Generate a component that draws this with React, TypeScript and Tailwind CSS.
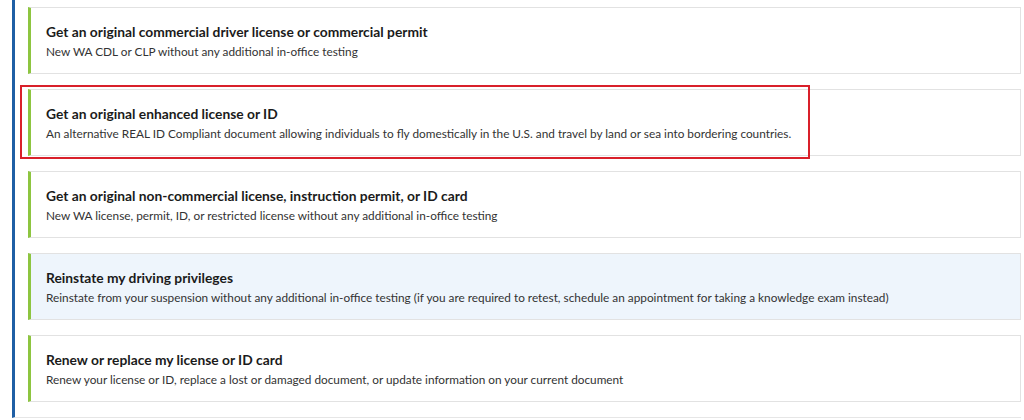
const services = [
  {
    title: "Get an original commercial driver license or commercial permit",
    desc: "New WA CDL or CLP without any additional in-office testing",
  },
  {
    title: "Get an original enhanced license or ID",
    desc: "An alternative REAL ID Compliant document allowing individuals to fly domestically in the U.S. and travel by land or sea into bordering countries.",
    marked: true,
  },
  {
    title: "Get an original non-commercial license, instruction permit, or ID card",
    desc: "New WA license, permit, ID, or restricted license without any additional in-office testing",
  },
  {
    title: "Reinstate my driving privileges",
    desc: "Reinstate from your suspension without any additional in-office testing (if you are required to retest, schedule an appointment for taking a knowledge exam instead)",
    hover: true,
  },
  {
    title: "Renew or replace my license or ID card",
    desc: "Renew your license or ID, replace a lost or damaged document, or update information on your current document",
  },
];

function ServiceCard({
  title,
  desc,
  marked,
  hover,
}: {
  title: string;
  desc: string;
  marked?: boolean;
  hover?: boolean;
}) {
  return (
    <div className="relative">
      <a
        href="#"
        className={
          "flex h-[67px] flex-col justify-center border border-l-[3px] border-[#e2e2e2] border-l-[#8dc540] pl-[15px] pr-4 pt-[2px] " +
          (hover ? "bg-[#eef5fc]" : "bg-white")
        }
      >
        <span className="text-[13.8px] font-bold leading-[20px] text-[#1b1b1b]">{title}</span>
        <span className="text-[11.8px] leading-[19px] text-[#333333]">{desc}</span>
      </a>
      {marked && (
        <div className="pointer-events-none absolute -left-[8px] -top-[4px] h-[74px] w-[790px] border-2 border-[#d9202a]" />
      )}
    </div>
  );
}

export default function App() {
  return (
    <div className="h-[420px] w-[1024px] bg-white font-['Lato',sans-serif]">
      <div className="ml-[12px] mr-[3px] flex flex-col gap-[15px] border-b border-l-[3px] border-b-[#e6e6e6] border-l-[#1f5fa5] pb-[15px] pl-[13px] pt-[7px]">
        {services.map((s) => (
          <ServiceCard key={s.title} {...s} />
        ))}
      </div>
    </div>
  );
}
